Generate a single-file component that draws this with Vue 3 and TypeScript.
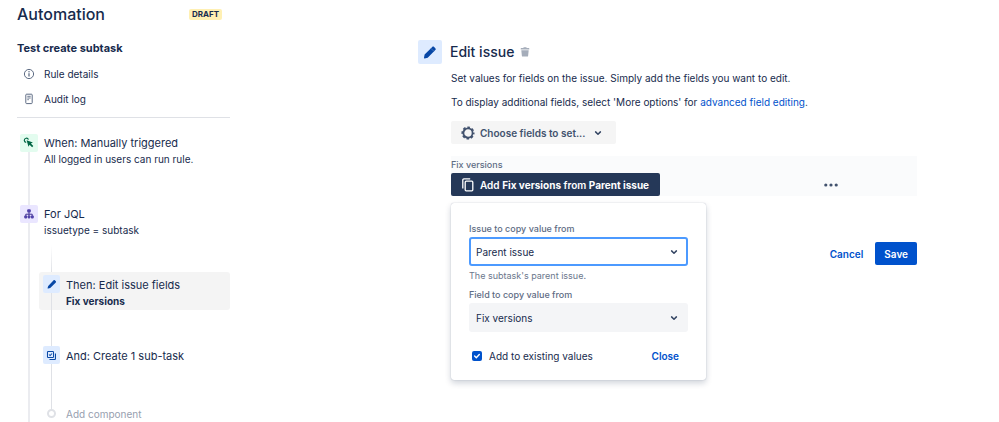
<script setup lang="ts">
import { ref } from 'vue'

const sourceIssue = ref<string>('Parent issue')
const sourceField = ref<string>('Fix versions')
const addToExisting = ref<boolean>(true)
const popupOpen = ref<boolean>(true)
</script>

<template>
  <div class="page">
    <aside class="sidebar">
      <header class="side-head">
        <h1>Automation</h1>
        <span class="lozenge">DRAFT</span>
      </header>
      <h2>Test create subtask</h2>
      <nav class="side-nav">
        <a href="#details">
          <svg width="12" height="12" viewBox="0 0 12 12" fill="none" stroke="#5e6c84">
            <circle cx="6" cy="6" r="4.6" />
            <path d="M6 5.3v3.2" stroke-width="1.3" />
            <circle cx="6" cy="3.7" r=".75" fill="#5e6c84" stroke="none" />
          </svg>
          Rule details
        </a>
        <a href="#audit">
          <svg width="12" height="12" viewBox="0 0 12 12" fill="none" stroke="#5e6c84">
            <rect x="2.8" y="1.2" width="6.4" height="9.4" rx=".8" />
            <path d="M4.3 3.3h3.4M4.3 5h3.4M4.3 6.7h1.6" stroke-width=".9" />
          </svg>
          Audit log
        </a>
      </nav>

      <ol class="steps">
        <li class="step">
          <div class="rail">
            <span class="badge green">
              <svg width="12" height="12" viewBox="0 0 12 12" fill="none" stroke="#006644">
                <path d="M3.2 5.4A2.1 2.1 0 1 1 5.4 2.7" stroke-width="1.2" />
                <path d="M3.6 3.2l6.3 2.2-2 1.1 2.4 2.5-1.2 1.2-2.5-2.4-1.1 2z" fill="#006644" stroke="none" />
              </svg>
            </span>
            <span class="line"></span>
          </div>
          <a class="label" href="#trigger">
            <span class="title">When: Manually triggered</span>
            <span class="sub">All logged in users can run rule.</span>
          </a>
        </li>
        <li class="step">
          <div class="rail">
            <span class="badge purple">
              <svg width="12" height="12" viewBox="0 0 12 12" fill="none" stroke="#403294">
                <path d="M6 4v2.2M2.8 8V6.2h6.4V8M6 6.2V8" stroke-width="1" />
                <g stroke="none" fill="#5243aa">
                  <rect x="4.2" y="1.3" width="3.6" height="3.2" rx=".9" />
                  <rect x="1.2" y="7.4" width="3" height="3" rx=".8" />
                  <rect x="4.7" y="7.4" width="2.6" height="3" rx=".8" />
                  <rect x="7.8" y="7.4" width="3" height="3" rx=".8" />
                </g>
              </svg>
            </span>
            <span class="line"></span>
          </div>
          <div>
            <a class="label" href="#branch">
              <span class="title">For JQL</span>
              <span class="sub">issuetype = subtask</span>
            </a>
            <ol class="branch">
              <li class="node">
                <span class="highlight"></span>
                <div class="rail thin">
                  <span class="badge blue">
                    <svg width="12" height="12" viewBox="0 0 12 12" fill="#0747a6">
                      <path d="M2.2 7.9l5.2-5.4c.6-.6 1.1-.6 1.6-.1l.7.7c.5.5.5 1-.1 1.6L4.2 9.9l-2 .5c-.5.1-.7-.1-.6-.5z" />
                    </svg>
                  </span>
                  <span class="line"></span>
                </div>
                <a class="label" href="#edit">
                  <span class="title">Then: Edit issue fields</span>
                  <strong class="sub">Fix versions</strong>
                </a>
              </li>
              <li class="node">
                <div class="rail thin">
                  <span class="badge blue">
                    <svg width="11" height="11" viewBox="0 0 12 12" fill="none" stroke="#0747a6">
                      <rect x="1.6" y="1.6" width="6.6" height="6.6" rx=".8" stroke-width="1.1" />
                      <path d="M3.3 4.9l1.2 1.2 2.1-2.3" stroke-width="1.1" />
                      <path d="M10.3 3.8v5.7a.8.8 0 0 1-.8.8H3.8" stroke-width="1.2" />
                    </svg>
                  </span>
                  <span class="line"></span>
                </div>
                <a class="label" href="#create"><span class="title">And: Create 1 sub-task</span></a>
              </li>
              <li class="node last">
                <div class="rail"><span class="ring"></span></div>
                <button type="button" class="add">Add component</button>
              </li>
            </ol>
          </div>
        </li>
      </ol>
    </aside>

    <main class="main">
      <header class="main-head">
        <span class="badge big blue">
          <svg width="16" height="16" viewBox="0 0 16 16" fill="#0747a6">
            <path d="M2.6 10.6l5.9-5.9 3.1 3.1-5.9 5.9-3 .7c-.5.1-.8-.2-.7-.7zM9 4.2l1.2-1.2c.6-.6 1.3-.6 1.9 0l1.2 1.2c.6.6.6 1.3 0 1.9l-1.2 1.2z" />
            <path d="M8.4 4.8l.7-.7 3.1 3.1-.7.7z" />
          </svg>
        </span>
        <h2>Edit issue</h2>
        <button type="button" class="icon-btn" aria-label="Delete">
          <svg width="10" height="10" viewBox="0 0 10 10" fill="#a5adba">
            <path d="M3.5 .3h3v.8h2.3c.3 0 .5.2.5.5v.9H.7v-.9c0-.3.2-.5.5-.5h2.3zM1.3 3.2h7.4l-.6 5.7c-.1.4-.3.6-.7.6H2.6c-.4 0-.6-.2-.7-.6z" />
          </svg>
        </button>
      </header>

      <div class="content">
        <p>Set values for fields on the issue. Simply add the fields you want to edit.</p>
        <p>
          To display additional fields, select 'More options' for
          <a href="#advanced">advanced field editing</a>.
        </p>
        <button type="button" class="choose">
          <svg width="14" height="14" viewBox="0 0 14 14" fill="none" stroke="#42526e">
            <circle cx="7" cy="7" r="4.6" stroke-width="1.8" />
            <circle cx="7" cy="7" r="5.8" stroke-width="1.5" stroke-dasharray="2.6 1.955" stroke-dashoffset="1.3" />
          </svg>
          Choose fields to set...
          <svg class="chev" width="8" height="8" viewBox="0 0 8 8"><path d="M1.6 2.9L4 5.2l2.4-2.3" /></svg>
        </button>

        <section class="field">
          <span class="small-label">Fix versions</span>
          <div class="field-row">
            <div class="anchor">
              <button type="button" class="copy" :aria-expanded="popupOpen" @click="popupOpen = !popupOpen">
                <svg width="14" height="14" viewBox="0 0 14 14" fill="none" stroke="#fff" stroke-width="1.3">
                  <rect x="4.2" y="3.2" width="7.6" height="9.6" rx="1" />
                  <path d="M1.8 10.6V2A1.1 1.1 0 0 1 2.9.9h6.3" />
                </svg>
                <span>Add <b>Fix versions</b> from <b>Parent issue</b></span>
              </button>
              <form v-if="popupOpen" class="popup" @submit.prevent>
                <label class="small-label" for="issue">Issue to copy value from</label>
                <div class="select focus">
                  <select id="issue" v-model="sourceIssue"><option>Parent issue</option></select>
                  <svg class="chev" width="8" height="8" viewBox="0 0 8 8"><path d="M1.6 2.9L4 5.2l2.4-2.3" /></svg>
                </div>
                <span class="help">The subtask's parent issue.</span>
                <label class="small-label" for="field">Field to copy value from</label>
                <div class="select">
                  <select id="field" v-model="sourceField"><option>Fix versions</option></select>
                  <svg class="chev" width="8" height="8" viewBox="0 0 8 8"><path d="M1.6 2.9L4 5.2l2.4-2.3" /></svg>
                </div>
                <div class="popup-foot">
                  <label class="check">
                    <span class="box">
                      <input v-model="addToExisting" type="checkbox" />
                      <svg v-if="addToExisting" width="10" height="10" viewBox="0 0 10 10"><path d="M2.6 5.1l1.7 1.6 3-3.1" /></svg>
                    </span>
                    Add to existing values
                  </label>
                  <button type="button" class="link" @click="popupOpen = false">Close</button>
                </div>
              </form>
            </div>
            <button type="button" class="icon-btn more" aria-label="More options">
              <svg width="14" height="4" viewBox="0 0 14 4" fill="#42526e">
                <circle cx="1.8" cy="2" r="1.6" /><circle cx="7" cy="2" r="1.6" /><circle cx="12.2" cy="2" r="1.6" />
              </svg>
            </button>
          </div>
        </section>

        <footer class="actions">
          <button type="button" class="link">Cancel</button>
          <button type="button" class="save">Save</button>
        </footer>
      </div>
    </main>
  </div>
</template>

<style>
body {
  background: #fff;
}
</style>

<style scoped>
.page,
.page * {
  box-sizing: border-box;
}
.page {
  display: grid;
  grid-template-columns: 213px minmax(0, 499px);
  justify-content: space-between;
  padding: 0 82px 0 17px;
  font-family: Inter, 'Liberation Sans', sans-serif;
  font-size: 10px;
  line-height: 16px;
  color: #172b4d;
}
h1,
h2,
p,
ol {
  margin: 0;
  padding: 0;
}
ol {
  list-style: none;
}
button,
select {
  font: inherit;
  color: inherit;
  border: 0;
  background: none;
  margin: 0;
  padding: 0;
  cursor: pointer;
}
a {
  color: inherit;
  text-decoration: none;
}
svg {
  display: block;
  flex: none;
}

/* sidebar */
.side-head {
  display: flex;
  align-items: center;
  justify-content: space-between;
  padding: 4px 8px 0 0;
}
h1 {
  font-size: 16px;
  line-height: 20px;
  font-weight: 500;
}
.lozenge {
  padding: 0 3px;
  border-radius: 2px;
  background: #fff0b3;
  font-size: 8px;
  line-height: 11px;
  font-weight: 700;
}
.sidebar h2 {
  margin-top: 16px;
  font-size: 11px;
  line-height: 16px;
  font-weight: 700;
}
.side-nav {
  display: grid;
  gap: 9px;
  padding: 10px 6px;
  border-bottom: 1px solid #dfe1e6;
}
.side-nav a {
  display: flex;
  align-items: center;
  gap: 9px;
}
.steps {
  padding: 16px 0 0 3px;
}
.step {
  display: grid;
  grid-template-columns: 18px 1fr;
  column-gap: 6px;
  min-height: 71px;
}
.rail {
  display: flex;
  flex-direction: column;
  align-items: center;
}
.line {
  flex: 1;
  width: 2px;
  background: #ebecf0;
}
.thin .line {
  width: 1px;
  background: #dfe1e6;
}
.badge {
  display: grid;
  place-items: center;
  flex: none;
  width: 100%;
  height: 18px;
  border-radius: 2px;
}
.green {
  background: #e3fcef;
}
.purple {
  background: #eae6ff;
}
.blue {
  background: #deebff;
}
.label {
  display: block;
}
.title,
.sub {
  display: block;
}
.title {
  font-size: 11px;
  line-height: 18px;
}
.sub {
  font-size: 10px;
  line-height: 14px;
}
.branch {
  margin: 8px 0 0 -5px;
}
.branch::before {
  content: '';
  display: block;
  width: 1px;
  height: 27px;
  margin-left: 12px;
  background: linear-gradient(#fff, #dfe1e6);
}
.node {
  display: grid;
  grid-template: 38px 33px / 27px 1fr;
}
.node.last {
  grid-template-rows: 16px;
  margin-top: -8px;
}
.highlight {
  grid-area: 1 / 1 / 2 / 3;
  border-radius: 3px;
  background: #f4f4f4;
}
.node .rail {
  grid-area: 1 / 1 / 3 / 2;
  width: 17px;
  margin: 3px 0 -3px 4px;
}
.node .label {
  grid-area: 1 / 2 / 2 / 3;
  padding-top: 4px;
}
.node.last .rail {
  grid-area: 1 / 1 / 2 / 2;
  margin: 0 0 0 4px;
}
.ring {
  width: 9px;
  height: 9px;
  margin-top: 3px;
  border: 2px solid #dfe1e6;
  border-radius: 50%;
  background: #fff;
}
.add {
  color: #97a0af;
  text-align: left;
}

/* main */
.main-head {
  display: flex;
  align-items: center;
  padding-top: 40px;
}
.big {
  width: 24px;
  height: 24px;
  margin-right: 8px;
}
.main-head h2 {
  margin-right: 6px;
  font-size: 14px;
  line-height: 20px;
  font-weight: 500;
}
.content {
  padding: 6px 0 0 33px;
}
.content p {
  margin-bottom: 8px;
}
.content p a,
.link {
  color: #0052cc;
}
.choose,
.copy {
  display: flex;
  align-items: center;
  height: 23px;
  padding: 0 10px;
  border-radius: 2px;
  font-weight: 600;
}
.choose {
  gap: 5px;
  margin-top: 11px;
  background: #f5f5f5;
  color: #42526e;
}
.chev {
  fill: none;
  stroke: #344563;
  stroke-width: 1.5;
  stroke-linecap: round;
  stroke-linejoin: round;
}
.choose .chev {
  margin: 0 4px;
}
.field {
  margin-top: 12px;
  background: #fafbfc;
}
.small-label {
  display: block;
  font-size: 9px;
  line-height: 17px;
  font-weight: 500;
  color: #5e6c84;
}
.field-row {
  display: flex;
  align-items: center;
  justify-content: space-between;
}
.more {
  margin-right: 79px;
}
.anchor {
  position: relative;
}
.copy {
  gap: 5px;
  padding-right: 11px;
  background: #253858;
  color: #fff;
}
b {
  font-weight: 700;
}
.popup {
  position: absolute;
  top: 30px;
  left: 0;
  width: 255px;
  padding: 17px 18px 16px;
  border-radius: 3px;
  background: #fff;
  box-shadow: 0 3px 6px rgba(9, 30, 66, 0.2), 0 0 1px rgba(9, 30, 66, 0.35);
}
.select {
  display: grid;
  grid-template-columns: 1fr 16px;
  align-items: center;
  height: 29px;
  border: 2px solid #f4f5f7;
  border-radius: 3px;
  background: #f4f5f7;
}
.select.focus {
  border-color: #4c9aff;
  background: #fff;
}
.select select {
  grid-area: 1 / 1 / 2 / 3;
  height: 25px;
  padding-left: 5px;
  appearance: none;
  outline: 0;
}
.select .chev {
  grid-area: 1 / 2 / 2 / 3;
  pointer-events: none;
}
.help {
  display: block;
  font-size: 9px;
  line-height: 20px;
  color: #6b778c;
}
.popup-foot {
  display: flex;
  align-items: center;
  justify-content: space-between;
  margin-top: 16px;
  padding: 0 9px 0 3px;
}
.check {
  display: flex;
  align-items: center;
  gap: 7px;
}
.box {
  display: grid;
}
.box input,
.box svg {
  grid-area: 1 / 1;
}
.box input {
  width: 10px;
  height: 10px;
  margin: 0;
  appearance: none;
  border: 1px solid #dfe1e6;
  border-radius: 2px;
}
.box input:checked {
  border: 0;
  background: #0052cc;
}
.box svg {
  pointer-events: none;
  fill: none;
  stroke: #fff;
  stroke-width: 1.4;
  stroke-linecap: round;
  stroke-linejoin: round;
}
.link {
  font-weight: 600;
}
.actions {
  display: flex;
  justify-content: flex-end;
  gap: 12px;
  margin-top: 46px;
}
.save {
  height: 23px;
  padding: 0 9px;
  border-radius: 2px;
  background: #0052cc;
  color: #fff;
  font-weight: 600;
}
</style>
